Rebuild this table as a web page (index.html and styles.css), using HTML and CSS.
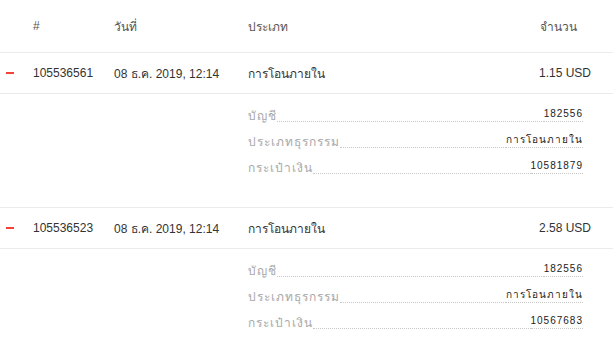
FILE: index.html
```html
<!DOCTYPE html>
<html lang="th">
<head>
<meta charset="utf-8">
<link rel="stylesheet" href="styles.css">
</head>
<body>
<div class="table">
  <div class="row head">
    <div class="c-icon"></div>
    <div class="c-id">#</div>
    <div class="c-date">วันที่</div>
    <div class="c-type">ประเภท</div>
    <div class="c-amount">จำนวน</div>
  </div>

  <div class="row item">
    <div class="c-icon"><span class="minus"></span></div>
    <div class="c-id">105536561</div>
    <div class="c-date">08 ธ.ค. 2019, 12:14</div>
    <div class="c-type">การโอนภายใน</div>
    <div class="c-amount">1.15 USD</div>
  </div>
  <div class="details">
    <div class="drow"><span class="dl">บัญชี</span><span class="fill"></span><span class="dv">182556</span></div>
    <div class="drow"><span class="dl">ประเภทธุรกรรม</span><span class="fill"></span><span class="dv">การโอนภายใน</span></div>
    <div class="drow"><span class="dl">กระเป๋าเงิน</span><span class="fill"></span><span class="dv">10581879</span></div>
  </div>

  <div class="row item">
    <div class="c-icon"><span class="minus"></span></div>
    <div class="c-id">105536523</div>
    <div class="c-date">08 ธ.ค. 2019, 12:14</div>
    <div class="c-type">การโอนภายใน</div>
    <div class="c-amount">2.58 USD</div>
  </div>
  <div class="details">
    <div class="drow"><span class="dl">บัญชี</span><span class="fill"></span><span class="dv">182556</span></div>
    <div class="drow"><span class="dl">ประเภทธุรกรรม</span><span class="fill"></span><span class="dv">การโอนภายใน</span></div>
    <div class="drow"><span class="dl">กระเป๋าเงิน</span><span class="fill"></span><span class="dv">10567683</span></div>
  </div>
</div>
</body>
</html>
```
FILE: styles.css
```css
html, body {
  margin: 0;
  padding: 0;
  background: #fff;
}
body {
  font-family: "Liberation Sans", Arial, sans-serif;
  font-size: 12px;
  color: #333;
  width: 613px;
  height: 351px;
  overflow: hidden;
}
.table {
  display: flex;
  flex-direction: column;
}
.row {
  display: grid;
  grid-template-columns: 33px 81px 134px 1fr auto;
  align-items: center;
  border-bottom: 1px solid #ebebeb;
}
.head {
  height: 52px;
  color: #555;
}
.head .c-amount {
  padding-right: 36px;
}
.item {
  height: 40px;
}
.item .c-amount {
  padding-right: 22px;
}
.c-icon {
  display: flex;
  align-items: center;
  padding-left: 6px;
}
.minus {
  display: block;
  width: 8px;
  height: 2px;
  background: #f44336;
}
.details {
  padding: 13px 30px 30px 248px;
  display: flex;
  flex-direction: column;
  gap: 8px;
  border-bottom: 1px solid #ebebeb;
}
.details:last-child {
  border-bottom: none;
}
.drow {
  display: flex;
  align-items: flex-end;
  height: 18px;
}
.dl {
  color: #a8a8a8;
  font-size: 12px;
  letter-spacing: 1px;
  line-height: 18px;
}
.fill {
  flex: 1;
  border-bottom: 1px dotted #c8c8c8;
  margin-bottom: 3px;
}
.dv {
  font-size: 10px;
  letter-spacing: 1px;
  color: #222;
  line-height: 14px;
  border-bottom: 1px dotted #c8c8c8;
  margin-bottom: 3px;
}
```
